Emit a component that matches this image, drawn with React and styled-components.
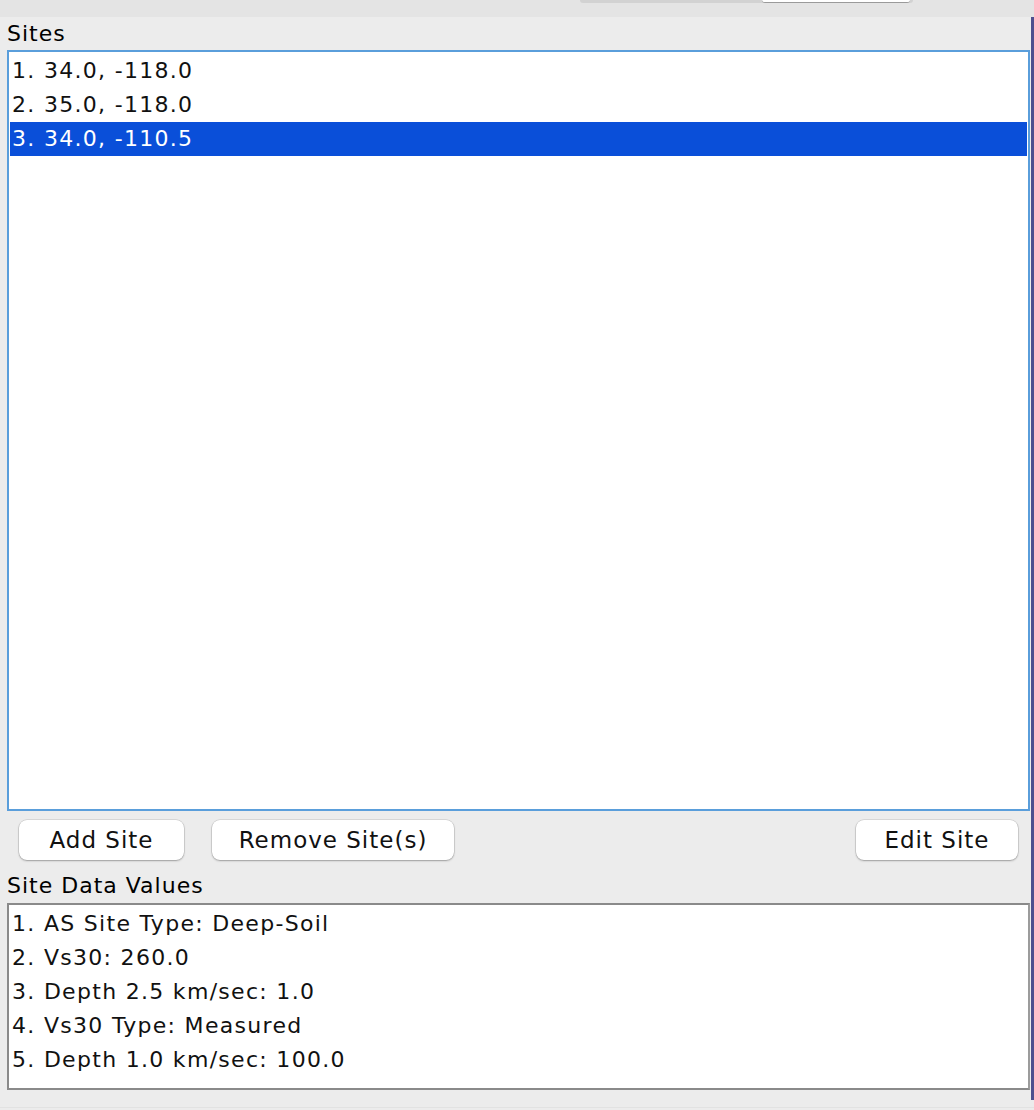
import React from "react";
import styled, { createGlobalStyle } from "styled-components";

const Global = createGlobalStyle`
  html, body {
    margin: 0;
    padding: 0;
    background: #ececec;
  }
  body {
    font-family: "DejaVu Sans", "Liberation Sans", sans-serif;
    color: #000;
  }
`;

const Window = styled.div`
  width: 1034px;
  height: 1110px;
  display: flex;
  flex-direction: column;
  overflow: hidden;
`;

const TopStrip = styled.div`
  height: 17px;
  background: #e4e4e4;
  display: flex;
  align-items: flex-start;
`;

const Segmented = styled.div`
  margin-left: 580px;
  width: 330px;
  height: 3px;
  background: #d2d2d2;
  border-radius: 0 0 6px 6px;
  display: flex;
  justify-content: flex-end;
  padding-right: 3px;
`;

const SegmentOn = styled.div`
  width: 148px;
  height: 2px;
  background: #fff;
  border-bottom: 1px solid #9a9a9a;
  border-radius: 0 0 4px 4px;
`;

const Panel = styled.div`
  height: 1083px;
  display: flex;
  flex-direction: column;
  padding-left: 7px;
  padding-right: 1px;
  border-left: 2px solid #e2e2e2;
  border-right: 3px solid #4e4f8e;
  box-sizing: border-box;
  margin-left: -2px;
`;

const Label = styled.div`
  height: ${(p) => p.h}px;
  font-size: 22px;
  line-height: 1;
  padding-top: ${(p) => p.top}px;
  box-sizing: border-box;
  letter-spacing: 1px;
`;

const ListBox = styled.div`
  height: ${(p) => p.h}px;
  box-sizing: border-box;
  background: #fff;
  border: 2px solid ${(p) => (p.focused ? "#5a9edb" : "#8a8a8a")};
  border-right-color: ${(p) => (p.focused ? "#5a9edb" : "#9c9c9c")};
  padding: 2px 1px;
  display: flex;
  flex-direction: column;
`;

const Row = styled.div`
  height: 34px;
  line-height: 34px;
  font-size: 22px;
  padding-left: 2px;
  letter-spacing: 1.3px;
  white-space: nowrap;
  background: ${(p) => (p.selected ? "#0a4fd9" : "transparent")};
  color: ${(p) => (p.selected ? "#fff" : "#111")};
`;

const ButtonRow = styled.div`
  display: flex;
  align-items: flex-start;
  gap: 28px;
  padding: 9px 12px 0 12px;
  height: 57px;
  box-sizing: border-box;
`;

const Button = styled.button`
  width: ${(p) => p.w}px;
  height: 40px;
  margin-left: ${(p) => (p.right ? "auto" : "0")};
  background: #fff;
  border: none;
  border-radius: 8px;
  box-shadow: 0 0 0 0.5px rgba(0, 0, 0, 0.16), 0 1px 2px rgba(0, 0, 0, 0.28);
  font-family: "DejaVu Sans", "Liberation Sans", sans-serif;
  font-size: 23px;
  color: #111;
  padding: 0;
  letter-spacing: 1px;
`;

const Footer = styled.div`
  flex: 1;
  background: #ececec;
  border-top: 1px solid #e2e2e2;
  margin-top: 7px;
`;

const sites = ["1. 34.0, -118.0", "2. 35.0, -118.0", "3. 34.0, -110.5"];
const values = [
  "1. AS Site Type: Deep-Soil",
  "2. Vs30: 260.0",
  "3. Depth 2.5 km/sec: 1.0",
  "4. Vs30 Type: Measured",
  "5. Depth 1.0 km/sec: 100.0",
];

export default function App() {
  return (
    <Window>
      <Global />
      <TopStrip>
        <Segmented>
          <SegmentOn />
        </Segmented>
      </TopStrip>
      <Panel>
        <Label h={33} top={6}>Sites</Label>
        <ListBox h={761} focused>
          {sites.map((s, i) => (
            <Row key={s} selected={i === 2}>
              {s}
            </Row>
          ))}
        </ListBox>
        <ButtonRow>
          <Button w={165}>Add Site</Button>
          <Button w={242}>Remove Site(s)</Button>
          <Button w={162} right>
            Edit Site
          </Button>
        </ButtonRow>
        <Label h={35} top={7}>Site Data Values</Label>
        <ListBox h={187}>
          {values.map((v) => (
            <Row key={v}>{v}</Row>
          ))}
        </ListBox>
      </Panel>
      <Footer />
    </Window>
  );
}
